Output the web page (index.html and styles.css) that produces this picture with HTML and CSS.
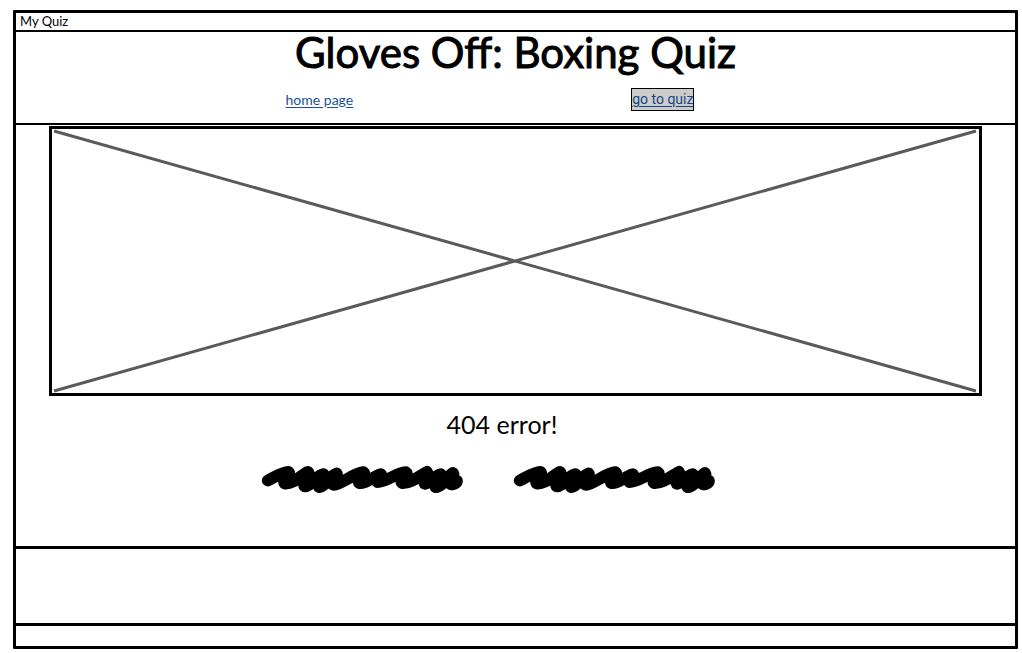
FILE: index.html
```html
<!DOCTYPE html>
<html lang="en">
<head>
<meta charset="utf-8">
<meta name="viewport" content="width=device-width, initial-scale=1">
<title>My Quiz</title>
<link rel="stylesheet" href="styles.css">
</head>
<body>
<div class="window">
  <div class="window-title">My Quiz</div>
  <header class="header">
    <h1 class="heading">Gloves Off: Boxing Quiz</h1>
    <nav class="nav">
      <a class="link" href="#home">home page</a>
      <a class="link link-boxed" href="#quiz">go to quiz</a>
    </nav>
  </header>
  <main class="main">
    <svg class="placeholder" viewBox="0 0 928 264" preserveAspectRatio="none" aria-hidden="true">
      <path d="M2 2 925 262M925 2 2 262"/>
    </svg>
    <p class="message">404 error!</p>
    <div class="scribbles">
      <svg class="scribble" viewBox="33 30 612 88" aria-hidden="true">
        <path id="scribble-line" d="M50 77C75 65 92 52 113 51C122 60 94 78 101 86C125 90 150 62 172 51C182 60 155 88 162 95C180 96 199 60 219 58C233 66 195 93 207 97C225 96 242 60 259 56C268 66 235 84 250 90C275 88 308 56 340 52C350 60 319 79 328 85C350 88 372 62 393 58C402 67 374 76 383 82C410 82 440 54 469 52C480 60 449 78 458 85C483 87 512 62 533 51C542 62 519 84 527 87C544 82 555 63 575 58C588 66 548 91 560 97C580 96 598 62 612 54C621 68 593 87 608 89C616 89 624 84 624 78"/>
        <path d="M165 72 240 72M535 72 620 76"/>
      </svg>
      <svg class="scribble" viewBox="33 30 612 88" aria-hidden="true">
        <use href="#scribble-line"/>
        <path d="M165 72 240 72M535 72 620 76"/>
      </svg>
    </div>
  </main>
  <footer class="footer"></footer>
  <div class="status"></div>
</div>
</body>
</html>
```
FILE: styles.css
```css
* { box-sizing: border-box; }

body {
  margin: 0;
  padding: 10px 4px 4px 13px;
  background: #fff;
  color: #000;
  font-family: Lato, "Open Sans", sans-serif;
}

.window {
  border: 3px solid #000;
  border-radius: 1px;
}

.window-title {
  padding-left: 4px;
  border-bottom: 2px solid #000;
  font-size: 13px;
  line-height: 17px;
}

.header {
  padding-bottom: 12px;
  border-bottom: 2px solid #000;
}

.heading {
  margin: 0;
  font-size: 42px;
  font-weight: 400;
  line-height: 40px;
  text-align: center;
  -webkit-text-stroke: 1px #000;
}

.nav {
  display: flex;
  justify-content: center;
  align-items: center;
  gap: 278px;
  padding: 16px 51px 0 0;
}

.link {
  color: #1a5296;
  font-size: 14px;
  line-height: 20px;
  text-underline-offset: 2px;
}

.link-boxed {
  border: 1px solid #000;
  background: #ccc;
  color: #174680;
  font-family: Roboto, sans-serif;
  line-height: 21px;
}

.main {
  padding: 1px 33px 52px;
  border-bottom: 3px solid #000;
}

.placeholder {
  display: block;
  width: 100%;
  height: 270px;
  border: 3px solid #000;
}

.placeholder path {
  fill: none;
  stroke: #5a5a5a;
  stroke-width: 3px;
}

.message {
  margin: 0;
  padding: 12px 27px 0 0;
  font-size: 25px;
  line-height: 32px;
  text-align: center;
}

.scribbles {
  display: flex;
  justify-content: center;
  gap: 48px;
  padding: 25px 54px 0 0;
}

.scribble {
  width: 204px;
  height: 29px;
  overflow: visible;
  fill: none;
  stroke: #000;
  stroke-width: 36px;
  stroke-linecap: round;
  stroke-linejoin: round;
}

.footer {
  height: 77px;
  border-bottom: 3px solid #000;
}

.status { height: 20px; }
```
